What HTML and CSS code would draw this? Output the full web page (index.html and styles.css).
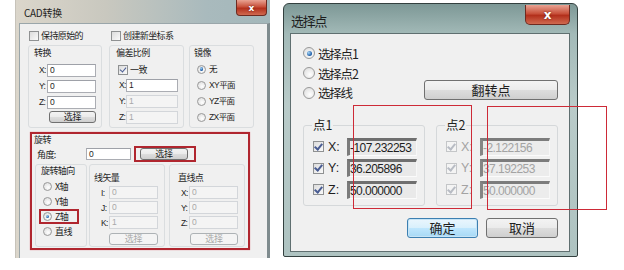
FILE: index.html
```html
<!DOCTYPE html>
<html>
<head>
	<meta charset="utf-8">
	<title>CAD转换 - 选择点</title>
	<link rel="stylesheet" href="styles.css">
</head>
<body>
	<div class="desk">
		<section class="win cad">
			<header class="bar">
				<span class="cap">CAD转换</span>
				<span class="close">x</span>
			</header>
			<div class="client">
				<div class="opts">
					<label class="chk"><i class="box"></i>保持原始的</label>
					<label class="chk"><i class="box"></i>创建新坐标系</label>
				</div>
				<div class="groups">
					<div class="grp g-trans">
						<h4>转换</h4>
						<div class="row"><span class="lab">X:</span><span class="edit">0</span></div>
						<div class="row"><span class="lab">Y:</span><span class="edit">0</span></div>
						<div class="row"><span class="lab">Z:</span><span class="edit">0</span></div>
						<button class="btn">选择</button>
					</div>
					<div class="grp g-scale">
						<h4>偏差比例</h4>
						<label class="chk"><i class="box on"></i>一致</label>
						<div class="row"><span class="lab">X:</span><span class="edit">1</span></div>
						<div class="row"><span class="lab">Y:</span><span class="edit off">1</span></div>
						<div class="row"><span class="lab">Z:</span><span class="edit off">1</span></div>
					</div>
					<div class="grp g-mirror">
						<h4>镜像</h4>
						<label class="opt"><i class="rad on"></i>无</label>
						<label class="opt"><i class="rad"></i>XY平面</label>
						<label class="opt"><i class="rad"></i>YZ平面</label>
						<label class="opt"><i class="rad"></i>ZX平面</label>
					</div>
				</div>
				<div class="rot">
					<h4>旋转</h4>
					<div class="angle">
						<span class="lab">角度:</span>
						<span class="edit">0</span>
						<span class="hilite"><button class="btn">选择</button></span>
					</div>
					<div class="subs">
						<div class="grp g-axis">
							<h4>旋转轴向</h4>
							<label class="opt"><i class="rad"></i>X轴</label>
							<label class="opt"><i class="rad"></i>Y轴</label>
							<label class="opt hilite"><i class="rad on"></i>Z轴</label>
							<label class="opt"><i class="rad"></i>直线</label>
						</div>
						<div class="grp g-vec">
							<h4>线矢量</h4>
							<div class="row"><span class="lab">I:</span><span class="edit off">0</span></div>
							<div class="row"><span class="lab">J:</span><span class="edit off">0</span></div>
							<div class="row"><span class="lab">K:</span><span class="edit off">1</span></div>
							<button class="btn off">选择</button>
						</div>
						<div class="grp g-pt">
							<h4>直线点</h4>
							<div class="row"><span class="lab">X:</span><span class="edit off">0</span></div>
							<div class="row"><span class="lab">Y:</span><span class="edit off">0</span></div>
							<div class="row"><span class="lab">Z:</span><span class="edit off">0</span></div>
							<button class="btn off">选择</button>
						</div>
					</div>
				</div>
			</div>
		</section>

		<section class="win pick">
			<header class="bar">
				<span class="cap">选择点</span>
				<span class="close">x</span>
			</header>
			<div class="client">
				<label class="opt"><i class="rad on"></i>选择点1</label>
				<label class="opt"><i class="rad"></i>选择点2</label>
				<div class="flip-row">
					<label class="opt"><i class="rad"></i>选择线</label>
					<button class="btn flip">翻转点</button>
				</div>
				<div class="points">
					<fieldset class="pt">
						<legend>点1</legend>
						<div class="row"><i class="box on"></i><span class="lab">X:</span><span class="num">-107.232253</span></div>
						<div class="row"><i class="box on"></i><span class="lab">Y:</span><span class="num">36.205896</span></div>
						<div class="row"><i class="box on"></i><span class="lab">Z:</span><span class="num">50.000000</span></div>
					</fieldset>
					<fieldset class="pt off">
						<legend>点2</legend>
						<div class="row"><i class="box on"></i><span class="lab">X:</span><span class="num">-2.122156</span></div>
						<div class="row"><i class="box on"></i><span class="lab">Y:</span><span class="num">37.192253</span></div>
						<div class="row"><i class="box on"></i><span class="lab">Z:</span><span class="num">50.000000</span></div>
					</fieldset>
				</div>
				<div class="actions">
					<button class="btn ok">确定</button>
					<button class="btn">取消</button>
				</div>
			</div>
		</section>

		<div class="mark m1"></div>
		<div class="mark m2"></div>
	</div>
</body>
</html>
```

FILE: styles.css
```css
* {
	box-sizing: border-box;
}
body {
	margin: 0;
	background: #fff;
	font-family: "Noto Sans CJK SC", "Liberation Sans", sans-serif;
	color: #1e1e1e;
}
.desk {
	position: relative;
	display: flex;
	align-items: flex-start;
	gap: 13px;
	padding-left: 15px;
	height: 270px;
}
h4 {
	margin: 0;
	font-weight: normal;
}
button {
	font-family: inherit;
	padding: 0;
}

/* ---- shared widgets ---- */
.box {
	display: inline-flex;
	align-items: center;
	justify-content: center;
	flex: none;
	border: 1px solid #8f9192;
	background: linear-gradient(135deg, #dcdcdc, #fafafa);
}
.box.on::after {
	content: "";
	width: 3px;
	height: 6px;
	margin-top: -2px;
	border-right: 2px solid #4a5d93;
	border-bottom: 2px solid #4a5d93;
	transform: rotate(40deg);
}
.rad {
	display: inline-flex;
	align-items: center;
	justify-content: center;
	flex: none;
	border-radius: 50%;
	border: 1px solid #999;
	background: radial-gradient(circle at 60% 65%, #fff, #d8d8d8);
}
.rad.on::after {
	content: "";
	width: 50%;
	height: 50%;
	border-radius: 50%;
	background: radial-gradient(circle at 35% 35%, #a8d8f8, #1b5aa5 70%);
}
.btn {
	border: 1px solid #707070;
	border-radius: 3px;
	background: linear-gradient(#f3f3f3 0%, #ebebeb 48%, #dddddd 52%, #cfcfcf 100%);
	color: #1e1e1e;
}
.btn.off {
	border-color: #adb2b5;
	background: #f4f4f4;
	color: #a8a8a8;
}
.close {
	display: flex;
	align-items: center;
	justify-content: center;
	border: 1px solid #6e2a20;
	border-top: none;
	border-radius: 0 0 4px 4px;
	background: linear-gradient(#e9a393, #c8513b 45%, #b3301c 55%, #d06a50);
	color: #fff;
	font-family: "DejaVu Sans", sans-serif;
	font-weight: bold;
	text-shadow: 0 0 2px #5a1a10;
}

/* ---- CAD转换 window ---- */
.cad {
	width: 255px;
	height: 258px;
	display: flex;
	flex-direction: column;
	padding: 0 3px;
	background: linear-gradient(90deg, #dbd6cb, #c9c8bf 35%, #a9babd 75%, #a3b7ba);
	border-left: 1px solid #c7c3ba;
}
.cad .bar {
	height: 23px;
	display: flex;
	justify-content: space-between;
}
.cad .cap {
	font-size: 10px;
	line-height: 12px;
	margin-top: 7px;
	padding-left: 5px;
	letter-spacing: -0.3px;
}
.cad .close {
	width: 31px;
	height: 16px;
	font-size: 9px;
}
.cad .client {
	flex: 1;
	background: #f0f0f0;
	border: 1px solid #9aa6aa;
	border-bottom: none;
	border-right: 3px solid #7f8b8e;
	margin-right: -3px;
	padding: 6px 0 0 8px;
	font-size: 9px;
	letter-spacing: -0.6px;
}
.cad .box {
	width: 10px;
	height: 10px;
	margin-right: 2px;
}
.cad .box.on::after {
	width: 3px;
	height: 5px;
	border-width: 1.5px;
}
.cad .rad {
	width: 9px;
	height: 9px;
	margin-right: 3px;
}
.cad .chk,
.cad .opt {
	display: flex;
	align-items: center;
	line-height: 12px;
}
.opts {
	display: flex;
	height: 12px;
	margin-left: 1px;
}
.opts .chk {
	width: 82px;
}
.cad .grp {
	border: 1px solid #dadddf;
	border-radius: 3px;
}
.cad h4 {
	font-size: 9px;
	line-height: 12px;
}
.cad .row {
	display: flex;
	align-items: center;
	height: 16px;
}
.cad .lab {
	font-family: "Liberation Sans", sans-serif;
	font-size: 8.5px;
}
.cad .edit {
	height: 13px;
	border: 1px solid #abadb3;
	border-top-color: #9ea1a8;
	background: #fff;
	font-family: "Liberation Sans", sans-serif;
	font-size: 8.5px;
	line-height: 11px;
	padding-left: 2px;
}
.cad .edit.off {
	background: #f4f4f4;
	border-color: #d3d6da;
	color: #a8a8a8;
}
.cad .btn {
	height: 12px;
	font-size: 9px;
	line-height: 10px;
	letter-spacing: -0.3px;
}

.groups {
	display: flex;
	margin-top: 3px;
	height: 83px;
}
.groups h4 {
	height: 16px;
	padding: 1px 0 0 5px;
}
.g-trans {
	width: 74px;
}
.g-trans .row {
	padding-left: 10px;
}
.g-trans .lab {
	width: 8px;
}
.g-trans .edit {
	width: 49px;
}
.g-trans .btn {
	width: 47px;
	margin: 1px 0 0 20px;
}
.g-scale {
	width: 75px;
	margin-left: 7px;
}
.g-scale h4 {
	padding-left: 6px;
}
.g-scale .chk {
	height: 15px;
	padding-left: 8px;
}
.g-scale .row {
	padding-left: 9px;
}
.g-scale .lab {
	width: 7px;
}
.g-scale .edit {
	width: 52px;
}
.g-mirror {
	width: 65px;
	margin-left: 5px;
}
.g-mirror h4 {
	height: 15px;
	padding-left: 4px;
}
.g-mirror .opt {
	height: 16px;
	padding-left: 7px;
	font-family: "Liberation Sans", "Noto Sans CJK SC", sans-serif;
	font-size: 8.5px;
}

.rot {
	width: 220px;
	height: 118px;
	margin: 4px 0 0 2px;
	border: 2px solid #b0262f;
	box-shadow: 0 0 1px #e07a80;
}
.rot > h4 {
	height: 12px;
	padding-left: 2px;
}
.angle {
	display: flex;
	align-items: center;
	height: 16px;
	padding-left: 5px;
}
.angle .lab {
	width: 49px;
	font-family: inherit;
	font-size: 9px;
}
.angle .edit {
	width: 45px;
	height: 12px;
}
.hilite {
	border: 2px solid #b0262f;
}
.angle .hilite {
	display: flex;
	align-items: center;
	height: 16px;
	margin-left: 3px;
	padding: 0 6px 0 4px;
}
.angle .btn {
	width: 48px;
}
.subs {
	display: flex;
	height: 83px;
	margin-top: 2px;
}
.g-axis {
	width: 52px;
	margin-left: 3px;
}
.g-axis h4 {
	height: 14px;
	padding-left: 5px;
}
.g-axis .opt {
	height: 15px;
	padding-left: 7px;
}
.g-axis .opt.hilite {
	width: 40px;
	margin-left: 3px;
	padding-left: 2px;
}
.g-vec,
.g-pt {
	width: 76px;
}
.g-vec {
	margin-left: 2px;
}
.g-pt {
	margin-left: 4px;
}
.g-vec h4,
.g-pt h4 {
	height: 20px;
	padding: 7px 0 0 4px;
}
.g-pt h4 {
	padding-left: 8px;
}
.g-vec .row,
.g-pt .row {
	height: 15px;
	padding-left: 11px;
}
.g-vec .lab,
.g-pt .lab {
	width: 8px;
}
.g-vec .edit,
.g-pt .edit {
	width: 49px;
	height: 13px;
}
.g-vec .btn {
	width: 49px;
	margin: 3px 0 0 19px;
}
.g-pt .btn {
	width: 48px;
	margin: 3px 0 0 20px;
}

/* ---- 选择点 window ---- */
.pick {
	width: 295px;
	height: 254px;
	margin-top: 3px;
	display: flex;
	flex-direction: column;
	padding: 0 7px 4px 6px;
	border: 1px solid #33403f;
	border-radius: 6px 6px 2px 2px;
	background: linear-gradient(#7d9896, #a3bab8 12%, #b9cbc9 40%, #aec3c1 100%);
}
.pick .bar {
	height: 29px;
	display: flex;
	justify-content: space-between;
}
.pick .cap {
	font-size: 13px;
	line-height: 16px;
	margin-top: 9px;
	padding-left: 1px;
	letter-spacing: -1.2px;
}
.pick .close {
	width: 45px;
	height: 20px;
	margin-top: 1px;
	font-size: 12px;
	border-radius: 0 0 5px 5px;
}
.pick .client {
	flex: 1;
	background: #f0f0f0;
	border: 1px solid #5f6f70;
	padding: 9px 11px 0 12px;
	font-size: 12.5px;
	letter-spacing: -1.2px;
}
.pick .opt {
	display: flex;
	align-items: center;
	height: 20px;
	font-family: "Noto Sans CJK SC", sans-serif;
}
.pick .rad {
	width: 12px;
	height: 12px;
	margin-right: 3px;
}
.flip-row {
	display: flex;
	justify-content: space-between;
	align-items: flex-start;
	height: 19px;
}
.flip-row .opt {
	height: 19px;
}
.pick .btn {
	height: 20px;
	font-size: 13px;
	letter-spacing: 0;
	line-height: 18px;
}
.flip {
	width: 134px;
	margin-top: -3px;
}
.points {
	display: flex;
	gap: 11px;
	margin-top: 16px;
}
.pt {
	width: 122px;
	height: 88px;
	margin: 0;
	padding: 0 0 0 9px;
	border: 1px solid #d5d8da;
	border-radius: 3px;
	min-width: 0;
}
.pt legend {
	padding: 0 1px;
	margin-left: -1px;
	font-size: 12.5px;
	line-height: 14px;
	letter-spacing: 0;
}
.pt .row {
	display: flex;
	align-items: center;
	height: 21.5px;
}
.pt .row:first-of-type {
	margin-top: 4px;
}
.pt .box {
	width: 11px;
	height: 11px;
}
.pt .lab {
	width: 23px;
	padding-left: 4px;
	font-family: "Liberation Sans", sans-serif;
	font-size: 12.5px;
	letter-spacing: 0;
}
.num {
	width: 70px;
	height: 18px;
	background: #e9e9e9;
	border-top: 3px solid #6f6f6f;
	border-left: 3px solid #7b7b7b;
	border-right: 1px solid #f7f7f7;
	border-bottom: 1px solid #fbfbfb;
	font-family: "Liberation Sans", sans-serif;
	font-size: 12px;
	line-height: 14px;
	letter-spacing: -0.55px;
	overflow: hidden;
	white-space: nowrap;
}
.pt.off .box {
	border-color: #c4c6c8;
	background: #f4f4f4;
}
.pt.off .box.on::after {
	border-color: #b8bcc4;
}
.pt.off .lab,
.pt.off .num {
	color: #a3a3a3;
}
.pt.off .num {
	border-top-color: #7c7c7c;
	border-left-color: #858585;
	background: #ececec;
}
.actions {
	display: flex;
	justify-content: flex-end;
	gap: 8px;
	margin-top: 12px;
}
.actions .btn {
	width: 72px;
}
.actions .ok {
	width: 71px;
	border-color: #3c7fb1;
	background: linear-gradient(#eaf6fd 0%, #d9f0fc 48%, #bee6fd 52%, #a7d9f5 100%);
	box-shadow: inset 0 0 0 1px #c6e4f6;
}

/* red annotation frames */
.mark {
	position: absolute;
	border: 1px solid #cd2a37;
}
.m1 {
	left: 353px;
	top: 105px;
	width: 119px;
	height: 104px;
}
.m2 {
	left: 487px;
	top: 106px;
	width: 120px;
	height: 104px;
}
```
